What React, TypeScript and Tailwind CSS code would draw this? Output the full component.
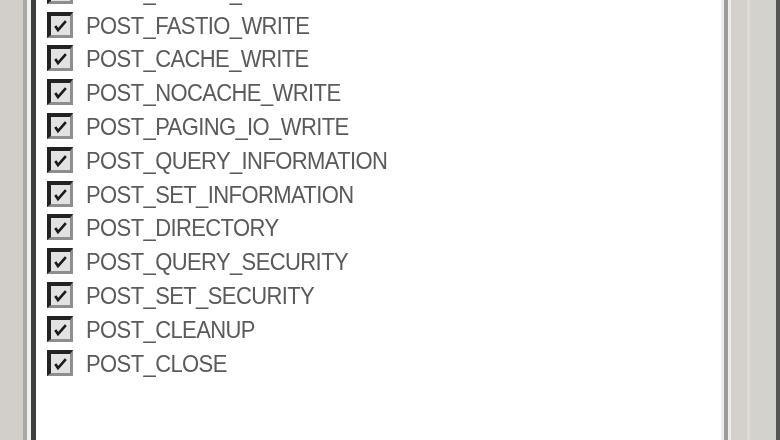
import React from "react";

const items = [
  "POST_FASTIO_READ",
  "POST_FASTIO_WRITE",
  "POST_CACHE_WRITE",
  "POST_NOCACHE_WRITE",
  "POST_PAGING_IO_WRITE",
  "POST_QUERY_INFORMATION",
  "POST_SET_INFORMATION",
  "POST_DIRECTORY",
  "POST_QUERY_SECURITY",
  "POST_SET_SECURITY",
  "POST_CLEANUP",
  "POST_CLOSE",
];

function Check() {
  return (
    <div className="w-[26px] h-[26px] shrink-0 border-t-[4px] border-l-[4px] border-b-[3px] border-r-[3px] border-t-[#222222] border-l-[#222222] border-b-[#8e8e8e] border-r-[#8e8e8e] bg-[#e2e2e2] flex items-center justify-center">
      <svg width="17" height="17" viewBox="0 0 17 17">
        <path d="M4 10 L6 13 L13 5" fill="none" stroke="#1a1a1a" strokeWidth="2.6" strokeLinecap="square" />
      </svg>
    </div>
  );
}

export default function App() {
  return (
    <div className="w-[780px] h-[440px] overflow-hidden flex bg-[#d4d0c8]" style={{ fontFamily: '"Liberation Sans", Arial, sans-serif' }}>
      <div className="w-[23px] shrink-0 bg-[#d2cfca]" />
      <div className="w-[4px] shrink-0 bg-[#a8a8a8]" />
      <div className="w-[4px] shrink-0 bg-[#f2f0ee]" />
      <div className="w-[5px] shrink-0 bg-[#3e3e3e]" />
      <div className="flex-1 bg-white flex flex-col pl-[11px] -mt-[26px]">
        {items.map((t) => (
          <div key={t} className="h-[33.8px] shrink-0 flex items-center gap-[13px]">
            <Check />
            <span className="text-[22px] tracking-[-0.6px] text-[#5a5a5a] leading-none blur-[0.5px] scale-y-110 translate-y-[1px]">{t}</span>
          </div>
        ))}
      </div>
      <div className="w-[3px] shrink-0 bg-[#ececec]" />
      <div className="w-[4px] shrink-0 bg-[#9c9c9c]" />
      <div className="w-[3px] shrink-0 bg-[#eeece8]" />
      <div className="w-[16px] shrink-0 bg-[#d4d1cc]" />
      <div className="w-[3px] shrink-0 bg-[#dedbd6]" />
      <div className="flex-1 max-w-[26px] bg-[#d3d2cd]" />
      <div className="w-[4px] shrink-0 bg-[#555555]" />
    </div>
  );
}
